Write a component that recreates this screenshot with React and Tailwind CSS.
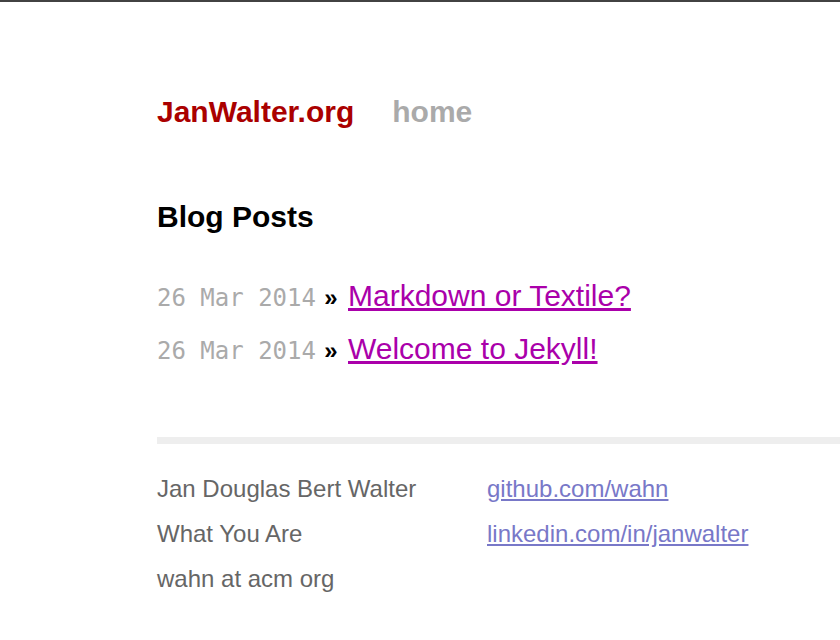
import React from 'react'

const posts = [
    { date: "26 Mar 2014", title: "Markdown or Textile?" },
    { date: "26 Mar 2014", title: "Welcome to Jekyll!" },
]

export default () => {
    return (
        <div className="min-h-[640px] w-[840px] overflow-hidden bg-white border-t-2 border-[#424242]" style={{ fontFamily: '"Liberation Sans", Arial, sans-serif' }}>
            <div className="ml-[157px] w-[700px]">
                <div className="mt-[92px] flex items-baseline text-[30px] leading-[36px] font-bold">
                    <a className="text-[#aa0000] no-underline">JanWalter.org</a>
                    <a className="ml-[38px] text-[#aaaaaa] no-underline">home</a>
                </div>

                <h2 className="mt-[69px] text-[30px] leading-[36px] font-bold text-black">Blog Posts</h2>

                <ul className="mt-[34px] text-[30px] leading-[53px]">
                    { posts.map( (post, index) =>
                        <li key={index} className="whitespace-nowrap">
                            <span className="text-[24px] leading-none text-[#aaaaaa]" style={{ fontFamily: '"DejaVu Sans Mono", monospace' }}>{ post.date }</span>
                            {" "}<span className="text-[24px] leading-none font-bold text-black">»</span>{" "}
                            <a className="ml-[2px] text-[#aa00aa] underline">{ post.title }</a>
                        </li>
                    ) }
                </ul>

                <div className="mt-[62px] h-[7px] bg-[#eeeeee]"></div>

                <div className="mt-[22px] grid grid-cols-[330px_1fr] text-[24px] leading-[45px] text-[#666666]">
                    <div>
                        <div>Jan Douglas Bert Walter</div>
                        <div>What You Are</div>
                        <div>wahn at acm org</div>
                    </div>
                    <div>
                        <div><a className="text-[#7878c8] underline">github.com/wahn</a></div>
                        <div><a className="text-[#7878c8] underline">linkedin.com/in/janwalter</a></div>
                    </div>
                </div>
            </div>
        </div>
    )
}
